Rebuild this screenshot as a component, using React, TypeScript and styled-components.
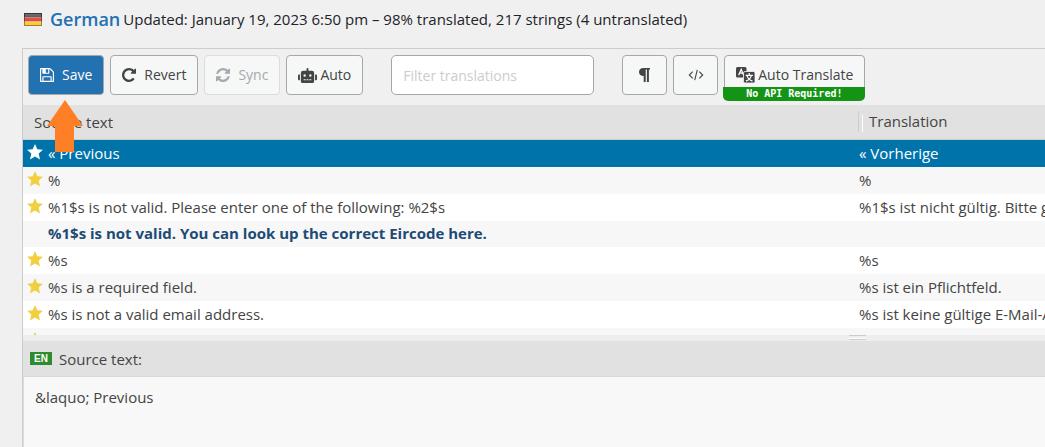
import React from "react";
import styled, { createGlobalStyle, css } from "styled-components";
import { FaRobot } from "react-icons/fa";

const GlobalStyle = createGlobalStyle`
  *, *::before, *::after { box-sizing: border-box; }
  body {
    margin: 0;
    background: #f0f0f1;
    color: #444;
    font: 15px/20px "Open Sans", "Noto Sans", sans-serif;
    overflow-x: hidden;
  }
  button, input, textarea { font: inherit; color: inherit; }
`;

const Page = styled.main`
  min-height: 100vh;
  display: flex;
  flex-direction: column;
  padding: 7px 0 0 22px;
`;

const Header = styled.header`
  display: flex;
  align-items: center;
  height: 24px;
  margin-bottom: 17px;
  padding-left: 2px;
  color: #1d2327;
  white-space: nowrap;
`;

const Language = styled.h1`
  display: flex;
  align-items: center;
  gap: 8px;
  margin: 0 3px 0 0;
  font-size: 18px;
  font-weight: 600;
  line-height: 24px;
  a { color: #2271b1; text-decoration: none; }
`;

const Editor = styled.section`
  position: relative;
  flex: 1;
  display: flex;
  flex-direction: column;
  border: solid #ccc;
  border-width: 1px 0 0 1px;
`;

const Toolbar = styled.nav`
  display: flex;
  gap: 28px;
  padding: 6px 5px 10px;
`;

const Group = styled.div`
  display: flex;
  gap: 6px;
`;

const Button = styled.button<{ $primary?: boolean; $square?: boolean; $tight?: boolean }>`
  display: flex;
  align-items: center;
  justify-content: center;
  gap: ${(p) => (p.$tight ? "3px" : "8px")};
  height: 40px;
  padding: ${(p) => (p.$square ? "0" : "0 11px")};
  ${(p) => p.$square && css`width: 45px;`}
  border: 1px solid #a7a7a7;
  border-radius: 4px;
  background: #f6f7f7;
  color: #444;
  font-size: 14px;
  white-space: nowrap;
  ${(p) => p.$primary && css`background: #2271b1; color: #fff;`}
  &:disabled { border-color: #dcdcde; color: #a7aaad; }
`;

const Filter = styled.input`
  width: 203px;
  height: 40px;
  padding: 0 11px;
  border: 1px solid #a7a7a7;
  border-radius: 5px;
  background: #fff;
  font-size: 14px;
  &::placeholder { color: #ccc; opacity: 1; }
`;

const Promo = styled.div`
  position: relative;
  display: flex;
`;

const PromoNote = styled.small`
  position: absolute;
  left: -1px;
  right: 0;
  top: 32px;
  height: 14px;
  border-radius: 0 0 5px 5px;
  background: #149414;
  color: #fff;
  font: bold 10px/14px "DejaVu Sans Mono", monospace;
  text-align: center;
  white-space: nowrap;
`;

const ListView = styled.div`
  height: 230px;
  overflow: hidden;
`;

const Table = styled.table`
  width: 100%;
  table-layout: fixed;
  border-collapse: collapse;
  white-space: nowrap;
  th, td {
    padding: 0 0 2px;
    overflow: hidden;
    text-align: left;
    font-weight: inherit;
  }
`;

const TranslationCol = styled.col`
  width: 187px;
`;

const HeadRow = styled.tr`
  height: 35px;
  background: #e1e1e1;
  box-shadow: inset 0 -1px #ccc;
`;

const HeadLabel = styled.span<{ $split?: boolean }>`
  display: block;
  padding-left: 11px;
  ${(p) => p.$split && css`
    border-left: 1px solid #ccc;
    padding-left: 3px;
    &::before {
      content: "";
      display: inline-block;
      width: 1px;
      height: 17px;
      margin-right: 6px;
      background: #fff;
      vertical-align: middle;
    }
  `}
`;

const Row = styled.tr<{ $selected?: boolean; $untranslated?: boolean }>`
  height: 27px;
  background: #fff;
  --star: #f0d040;
  &:nth-child(even) { background: #f7f7f7; }
  ${(p) => p.$untranslated && css`height: 26px; color: #1c4b75; font-weight: 700;`}
  ${(p) => p.$selected && css`background: #0073aa; color: #fff; --star: #fff;`}
`;

const Source = styled.span`
  display: flex;
  align-items: center;
  gap: 5px;
  padding-left: 4px;
`;

const StarSlot = styled.span`
  display: flex;
  width: 16px;
  height: 18px;
  color: var(--star);
`;

const Target = styled.span`
  padding-left: 1px;
`;

const Splitter = styled.div`
  display: flex;
  justify-content: flex-end;
  height: 6px;
  padding-right: 179px;
  background: #eee;
`;

const Grip = styled.span`
  width: 17px;
  height: 5px;
  border: solid #ccc;
  border-width: 1px 0;
  box-shadow: inset 0 -1px #fff;
`;

const SourceLabel = styled.label`
  display: flex;
  align-items: center;
  gap: 7px;
  height: 36px;
  padding-left: 7px;
  border-bottom: 1px solid #d8d8d8;
  background: #e1e1e1;
`;

const Lang = styled.span`
  width: 22px;
  height: 13px;
  background: #2e8b2e;
  color: #fff;
  font: bold 10px/13px "Liberation Sans", sans-serif;
  text-align: center;
`;

const SourceText = styled.textarea`
  flex: 1;
  display: block;
  min-height: 70px;
  padding: 10px 11px;
  border: 0;
  border-left: 1px solid #ddd;
  background: #f8f8f8;
  resize: none;
  outline: 0;
`;

const Pointer = styled.svg`
  position: absolute;
  left: 24px;
  top: 51px;
  pointer-events: none;
`;

const Flag = () => (
  <svg width="18" height="13" viewBox="0 0 18 13" role="img" aria-label="Germany">
    <defs>
      <linearGradient id="shine" x1="0" y1="0" x2="0" y2="1">
        <stop offset="0" stopColor="#fff" stopOpacity=".35" />
        <stop offset="1" stopColor="#fff" stopOpacity=".05" />
      </linearGradient>
    </defs>
    <path fill="#222" d="M0 0h18v4.500H0z" />
    <path fill="#d8201c" d="M0 4.500h18v4H0z" />
    <path fill="#f7c62c" d="M0 8.500h18V13H0z" />
    <path fill="url(#shine)" d="M1 1h16v11H1z" />
    <path fill="none" stroke="#5a4630" strokeOpacity=".55" d="M.5.5h17v12H.5z" />
  </svg>
);

const SaveIcon = () => (
  <svg width="14" height="14" viewBox="0 128 1536 1536" fill="currentColor">
    <path d="M384 1536h768v-384h-768v384zM1280 1536h128v-896q0-14-10-38.500t-20-34.500l-281-281q-10-10-34-20t-39-10v416q0 40-28 68t-68 28h-576q-40 0-68-28t-28-68v-416h-128v1280h128v-416q0-40 28-68t68-28h832q40 0 68 28t28 68v416zM896 608v-320q0-13-9.500-22.500t-22.500-9.500h-192q-13 0-22.500 9.500t-9.500 22.500v320q0 13 9.500 22.500t22.500 9.500h192q13 0 22.500-9.500t9.500-22.500zM1536 640v928q0 40-28 68t-68 28h-1344q-40 0-68-28t-28-68v-1344q0-40 28-68t68-28h928q40 0 88 20t76 48l280 280q28 28 48 76t20 88z" />
  </svg>
);

const RevertIcon = () => (
  <svg width="14" height="14" viewBox="0 128 1536 1536" fill="currentColor">
    <path d="M1536 256v448q0 26-19 45t-45 19h-448q-42 0-59-40-17-39 14-69l138-138q-148-137-349-137-104 0-198.500 40.500t-163.500 109.500-109.500 163.500-40.500 198.500 40.500 198.500 109.500 163.500 163.500 109.500 198.500 40.500q119 0 225-52t179-147q7-10 23-12 15 0 25 9l137 138q9 8 9.500 20.500t-7.500 22.500q-109 132-264 204.500t-327 72.500q-156 0-298-61t-245-164-164-245-61-298 61-298 164-245 245-164 298-61q147 0 284.500 55.500t244.500 156.500l130-129q29-31 70-14 39 17 39 59z" />
  </svg>
);

const SyncIcon = () => (
  <svg width="14" height="14" viewBox="0 128 1536 1536" fill="currentColor">
    <path d="M1511 1056q0 5-1 7-64 268-268 434.500t-478 166.500q-146 0-282.500-55t-243.500-157l-129 129q-19 19-45 19t-45-19-19-45v-448q0-26 19-45t45-19h448q26 0 45 19t19 45-19 45l-137 137q71 66 161 102t187 36q134 0 250-65t186-179q11-17 53-117 8-23 30-23h192q13 0 22.500 9.500t9.500 22.500zM1536 256v448q0 26-19 45t-45 19h-448q-26 0-45-19t-19-45 19-45l138-138q-148-137-349-137-134 0-250 65t-186 179q-11 17-53 117-8 23-30 23h-199q-13 0-22.500-9.500t-9.500-22.500v-7q65-268 270-434.500t480-166.500q146 0 284 55.500t245 156.500l130-129q19-19 45-19t45 19 19 45z" />
  </svg>
);

const PilcrowIcon = () => (
  <svg width="11" height="14" viewBox="0 0 11 14" fill="currentColor">
    <path d="M4.500 0H11v1.600H9.900V14H7.900V1.600H6.700V14h-2V8C2 8 0 6.400 0 4s1.900-4 4.500-4z" />
  </svg>
);

const CodeIcon = () => (
  <svg width="16" height="12" viewBox="0 0 16 12" fill="none" stroke="currentColor" strokeWidth="1.1">
    <path d="M4.700 2.700 1.300 6l3.400 3.300M11.300 2.700 14.700 6l-3.400 3.300M9.300.800 6.700 11.200" />
  </svg>
);

const TranslateIcon = () => (
  <svg width="19" height="16" viewBox="0 0 19 16" fill="none">
    <rect width="10.500" height="10.500" rx="1.500" fill="#444" />
    <path d="M2.600 8.200 5.200 2.300 7.600 8.200M3.400 6.200h3.500" stroke="#fff" strokeWidth="1.300" />
    <rect x="7.500" y="4.500" width="11.500" height="11.500" rx="1.500" fill="#444" stroke="#f6f7f7" strokeWidth=".8" />
    <path d="M13.200 6v2M9.600 8.300h7.300M11 8.600c.8 2.600 2.700 4.600 5.500 5.500M15.400 8.600c-.8 2.600-2.700 4.600-5.500 5.500" stroke="#fff" strokeWidth="1.200" />
  </svg>
);

const StarIcon = () => (
  <svg width="16" height="16" viewBox="0 0 16 16" fill="currentColor" aria-hidden="true">
    <path d="m8 0 2.300 5.200 5.700.500-4.300 3.800 1.300 5.900L8 12.400l-5 3 1.300-5.900L0 5.700l5.700-.500z" />
  </svg>
);

const strings = [
  { source: "« Previous", target: "« Vorherige" },
  { source: "%", target: "%" },
  {
    source: "%1$s is not valid. Please enter one of the following: %2$s",
    target: "%1$s ist nicht gültig. Bitte gib eines der folgenden ein: %2$s",
  },
  { source: "%1$s is not valid. You can look up the correct Eircode here.", target: "" },
  { source: "%s", target: "%s" },
  { source: "%s is a required field.", target: "%s ist ein Pflichtfeld." },
  { source: "%s is not a valid email address.", target: "%s ist keine gültige E-Mail-Adresse." },
  { source: "%s is not a valid phone number.", target: "%s ist keine gültige Telefonnummer." },
];

export default function App() {
  return (
    <>
      <GlobalStyle />
      <Page>
        <Header>
          <Language>
            <Flag />
            <a href="#german">German</a>
          </Language>
          <span>Updated: January 19, 2023 6:50 pm – 98% translated, 217 strings (4 untranslated)</span>
        </Header>
        <Editor>
          <Toolbar aria-label="Editor tools">
            <Group>
              <Button $primary><SaveIcon />Save</Button>
              <Button><RevertIcon />Revert</Button>
              <Button disabled><SyncIcon />Sync</Button>
              <Button $tight><FaRobot size={19} />Auto</Button>
            </Group>
            <Filter type="text" placeholder="Filter translations" aria-label="Filter translations" />
            <Group>
              <Button $square aria-label="Toggle invisibles"><PilcrowIcon /></Button>
              <Button $square aria-label="Toggle code view"><CodeIcon /></Button>
              <Promo>
                <Button $tight><TranslateIcon />Auto Translate</Button>
                <PromoNote>No API Required!</PromoNote>
              </Promo>
            </Group>
          </Toolbar>
          <ListView>
            <Table>
              <colgroup>
                <col />
                <TranslationCol />
              </colgroup>
              <thead>
                <HeadRow>
                  <th scope="col"><HeadLabel>Source text</HeadLabel></th>
                  <th scope="col"><HeadLabel $split>Translation</HeadLabel></th>
                </HeadRow>
              </thead>
              <tbody>
                {strings.map((s, i) => (
                  <Row key={s.source} $selected={i === 0} $untranslated={!s.target}>
                    <td>
                      <Source>
                        <StarSlot>{s.target && <StarIcon />}</StarSlot>
                        {s.source}
                      </Source>
                    </td>
                    <td><Target>{s.target}</Target></td>
                  </Row>
                ))}
              </tbody>
            </Table>
          </ListView>
          <Splitter><Grip /></Splitter>
          <SourceLabel htmlFor="source-text"><Lang>EN</Lang>Source text:</SourceLabel>
          <SourceText id="source-text" readOnly defaultValue="&amp;laquo; Previous" />
          <Pointer width="36" height="53" viewBox="0 0 36 53" aria-hidden="true">
            <path fill="#ff7f27" d="M18 0 36 26h-9v26H8V26H0z" />
          </Pointer>
        </Editor>
      </Page>
    </>
  );
}
